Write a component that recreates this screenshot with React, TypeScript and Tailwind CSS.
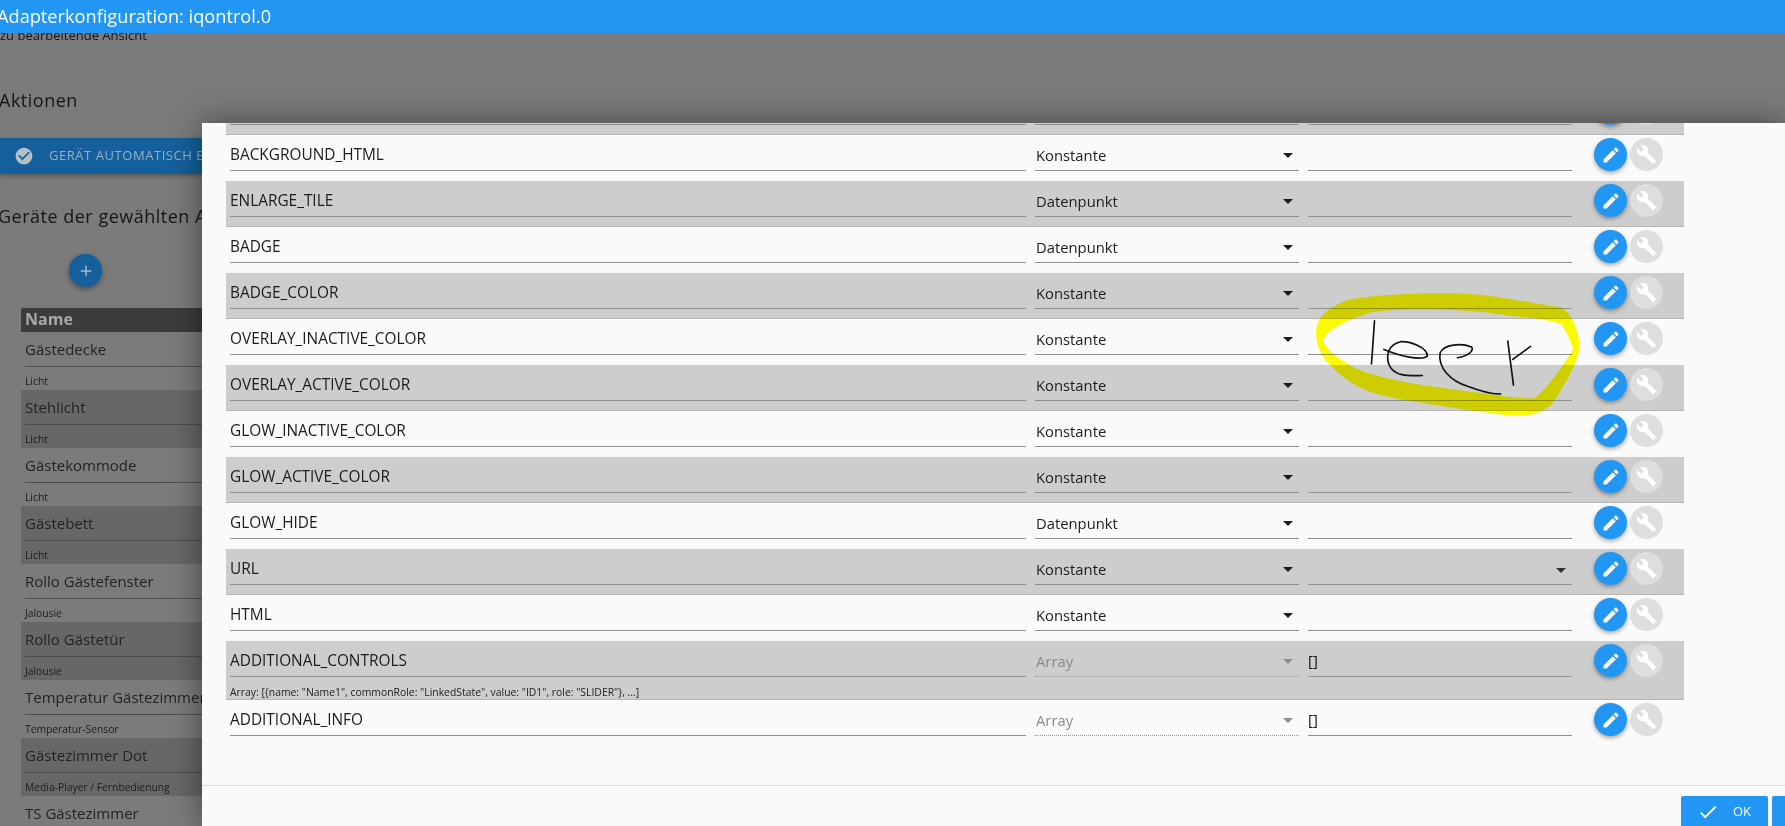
import React from "react";
import { MdAdd, MdArrowDropDown, MdBuild, MdCheck, MdCheckCircle, MdEdit } from "react-icons/md";

interface StateRow {
  name: string;
  type: string;
  value?: string;
  hint?: string;
  dropdown?: boolean;
}

const stateRows: StateRow[] = [
  { name: "BACKGROUND_VIEW", type: "Konstante" },
  { name: "BACKGROUND_HTML", type: "Konstante" },
  { name: "ENLARGE_TILE", type: "Datenpunkt" },
  { name: "BADGE", type: "Datenpunkt" },
  { name: "BADGE_COLOR", type: "Konstante" },
  { name: "OVERLAY_INACTIVE_COLOR", type: "Konstante" },
  { name: "OVERLAY_ACTIVE_COLOR", type: "Konstante" },
  { name: "GLOW_INACTIVE_COLOR", type: "Konstante" },
  { name: "GLOW_ACTIVE_COLOR", type: "Konstante" },
  { name: "GLOW_HIDE", type: "Datenpunkt" },
  { name: "URL", type: "Konstante", dropdown: true },
  { name: "HTML", type: "Konstante" },
  {
    name: "ADDITIONAL_CONTROLS",
    type: "Array",
    value: "[]",
    hint: 'Array: [{name: "Name1", commonRole: "LinkedState", value: "ID1", role: "SLIDER"}, ...]',
  },
  { name: "ADDITIONAL_INFO", type: "Array", value: "[]" },
];

const devices = [
  { name: "Gästedecke", role: "Licht" },
  { name: "Stehlicht", role: "Licht" },
  { name: "Gästekommode", role: "Licht" },
  { name: "Gästebett", role: "Licht" },
  { name: "Rollo Gästefenster", role: "Jalousie" },
  { name: "Rollo Gästetür", role: "Jalousie" },
  { name: "Temperatur Gästezimmer", role: "Temperatur-Sensor" },
  { name: "Gästezimmer Dot", role: "Media-Player / Fernbedienung" },
  { name: "TS Gästezimmer", role: "" },
];

const Row: React.FC<{ row: StateRow; odd: boolean }> = ({ row, odd }) => {
  const isArray = row.type === "Array";
  return (
    <div
      className={`relative pl-1 ${row.hint ? "h-[59px]" : "h-[46px]"} ${
        odd ? "bg-[#cdcdcd] border-b border-[#b4b4b4]" : ""
      }`}
    >
      <div className="flex items-start">
        <div className="w-[796px] h-[36px] pt-[10px] border-b border-[#8f8f8f] text-[15.4px] leading-[20px] text-[#1c1c1c]">
          {row.name}
        </div>
        <div
          className={`ml-[9px] w-[264px] h-[36px] pt-[10px] pl-[1px] flex justify-between text-[14.8px] leading-[20px] border-b ${
            isArray ? "border-dotted border-[#9a9a9a] text-[#8a8a8a]" : "border-[#8f8f8f] text-[#1c1c1c]"
          }`}
        >
          <span>{row.type}</span>
          <MdArrowDropDown
            size={24}
            className={`-mt-[2px] mr-[-1px] ${isArray ? "text-[#8e8e8e]" : "text-[#1c1c1c]"}`}
          />
        </div>
        <div className="ml-[9px] w-[264px] h-[36px] pt-[9px] flex justify-between border-b border-[#8f8f8f] text-[15px] leading-[20px] text-[#111]">
          <span>{row.value}</span>
          {row.dropdown && <MdArrowDropDown size={24} className="-mr-[1px] text-[#333]" />}
        </div>
        <button className="ml-[22px] mt-[3px] w-[33px] h-[33px] shrink-0 rounded-full bg-[#2196f3] text-white flex items-center justify-center shadow-[0_2px_4px_rgba(0,0,0,0.35)]">
          <MdEdit size={20} />
        </button>
        <button className="ml-[3px] mt-[3px] w-[33px] h-[33px] shrink-0 rounded-full bg-[#dedede] text-white flex items-center justify-center">
          <MdBuild size={21} />
        </button>
      </div>
      {row.hint && <p className="pt-[9px] text-[10.4px] leading-[12px] text-[#222]">{row.hint}</p>}
    </div>
  );
};

const App: React.FC = () => {
  return (
    <div className="relative h-[826px] w-[1785px] overflow-hidden bg-[#7b7b7b] font-['Open_Sans','Noto_Sans',sans-serif]">
      <header className="relative z-10 h-[33px] bg-[#2196f3] -indent-[3px] text-[18.2px] leading-[33px] text-white">
        Adapterkonfiguration: iqontrol.0
      </header>

      {/* page behind the dialog */}
      <div className="-mt-[6px] text-[#161616]">
        <p className="text-[13px] leading-[16px]">zu bearbeitende Ansicht</p>
        <h2 className="mt-[44px] -ml-[1px] text-[18px] leading-[26px] tracking-[0.5px]">Aktionen</h2>
        <div className="mt-[25px] h-[36px] w-[204px] bg-[#15609c] flex items-center pl-[14px] overflow-hidden whitespace-nowrap shadow-[0_2px_4px_rgba(0,0,0,0.3)]">
          <MdCheckCircle size={20} className="shrink-0 text-[#b4c0c8]" />
          <span className="ml-[15px] text-[13px] tracking-[0.55px] text-[#92b1c8]">GERÄT AUTOMATISCH ERSTELLEN</span>
        </div>
        <h2 className="mt-[29px] -ml-[2px] text-[18px] leading-[26px] tracking-[0.5px] whitespace-nowrap">
          Geräte der gewählten Ansicht
        </h2>
        <button className="ml-[69px] mt-[25px] block w-[33px] h-[33px] rounded-full bg-[#15609c] text-[#9fb9cc] shadow-[0_2px_5px_rgba(0,0,0,0.4)]">
          <MdAdd size={18} className="mx-auto" />
        </button>
        <div className="ml-[21px] mt-[21px] w-[300px]">
          <div className="h-[24px] rounded-t-[2px] bg-[#3c3c3c] pl-[4px] text-[16px] font-bold leading-[23px] text-[#a8a8a8]">
            Name
          </div>
          {devices.map((device, index) => (
            <div key={device.name} className={`h-[58px] pl-[4px] ${index % 2 === 1 ? "bg-[#676767]" : ""}`}>
              <div className="h-[35px] pt-[7px] border-b border-[#4f4f4f] text-[15px] leading-[20px] text-[#232323] whitespace-nowrap">
                {device.name}
              </div>
              <p className="pt-[8px] text-[10.3px] leading-[12px] text-[#1c1c1c]">{device.role}</p>
            </div>
          ))}
        </div>
      </div>

      {/* dialog */}
      <div className="absolute left-[202px] right-0 top-[123px] bottom-0 z-20 bg-[#fafafa] shadow-[0_0_30px_rgba(0,0,0,0.45)]">
        <div className="h-[662px] overflow-hidden pl-[24px] pr-[101px]">
          <div className="-mt-[34px]">
            {stateRows.map((row, index) => (
              <Row key={row.name} row={row} odd={index % 2 === 0} />
            ))}
          </div>
        </div>
        <div className="h-[41px] border-t border-[#e0e0e0] pt-[10px] pl-[1479px] flex gap-[4px] overflow-hidden">
          <button className="w-[87px] h-[32px] shrink-0 rounded-t-[2px] bg-[#2196f3] text-white flex items-center pl-[16px]">
            <MdCheck size={22} />
            <span className="ml-[14px] text-[13px]">OK</span>
          </button>
          <button className="w-[110px] h-[32px] shrink-0 rounded-t-[2px] bg-[#2196f3]" />
        </div>
      </div>

      {/* hand-drawn marking on top of the dialog */}
      <svg
        className="absolute left-[1260px] top-[110px] z-30 mix-blend-multiply"
        width="525"
        height="320"
        viewBox="0 0 1568 955.7"
      >
        <path
          fillRule="evenodd"
          fill="#ffff00"
          d="M168 660 C170 620 195 595 260 568 C340 552 470 546 600 548 C700 552 800 575 900 590 C930 610 945 640 955 700 C950 750 920 810 870 880 C840 905 800 918 740 912 C640 900 500 878 400 860 C330 848 280 825 240 790 C190 750 165 710 168 660 Z M188 690 C195 665 225 640 330 605 C420 592 520 592 680 605 C760 620 850 620 900 640 C920 670 930 695 935 715 C900 770 860 830 820 860 C780 865 700 850 600 838 C500 825 400 810 320 785 C260 765 205 725 188 690 Z"
        />
      </svg>
      <svg
        className="absolute left-[1260px] top-[110px] z-30"
        width="525"
        height="320"
        viewBox="0 0 1568 955.7"
        fill="none"
        stroke="#111"
        strokeWidth="5"
        strokeLinecap="round"
      >
        <path d="M342 630 L333 758" />
        <path d="M370 715 C420 735 480 750 500 735 C500 710 450 690 420 692 C385 700 375 730 385 760 C400 795 440 795 485 793" />
        <path d="M590 740 C620 735 640 720 632 708 C600 695 550 700 538 725 C530 770 570 810 620 825 C660 840 690 850 718 848" />
        <path d="M740 690 L757 822 M755 745 L808 706" />
      </svg>
    </div>
  );
};

export default App;
